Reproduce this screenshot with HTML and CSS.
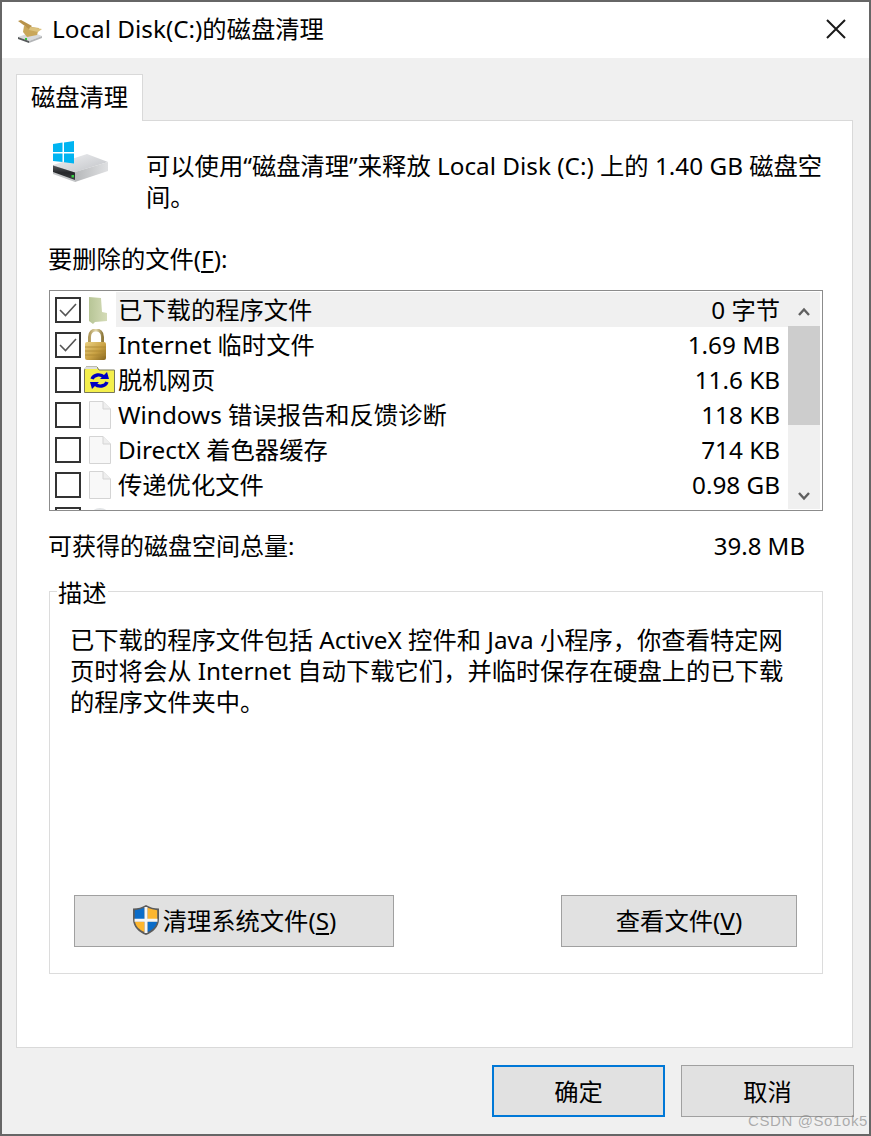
FILE: index.html
```html
<!DOCTYPE html>
<html lang="zh-CN">
<head>
  <meta charset="UTF-8" />
  <title>Local Disk(C:)的磁盘清理</title>
  <link rel="stylesheet" href="styles.css">
</head>
<body>
  <div class="window">
    <div class="titlebar">
      <svg class="title-icon" viewBox="17 17 28 26" width="28" height="26">
        <polygon points="18,36 32,31 42,35 29,40" fill="#d8dadc"/>
        <polygon points="18,36 29,40 29,42 18,38" fill="#55585a"/>
        <polygon points="29,40 42,35 42,37 29,42" fill="#b4b6b8"/>
        <rect x="25" y="37" width="2" height="2" fill="#35c040"/>
        <polygon points="24,25 39,27 37,34 27,36 23,31" fill="#c9a75a"/>
        <polygon points="18,20 21,19 32,25 29,28" fill="#b8924a"/>
        <polygon points="30,26 42,28 38,31 29,29" fill="#dcc27e"/>
      </svg>
      <span class="title-text">Local Disk(C:)的磁盘清理</span>
      <svg class="close-icon" viewBox="0 0 20 20" width="20" height="20">
        <path d="M1 1 L19 19 M19 1 L1 19" stroke="#1a1a1a" stroke-width="2" fill="none"/>
      </svg>
    </div>

    <div class="content">
      <div class="tab">磁盘清理</div>
      <div class="panel">
        <div class="intro">
          <svg class="drive-icon" viewBox="52 140 60 44" width="60" height="44">
            <defs>
              <linearGradient id="driveTop" x1="0" y1="0" x2="1" y2="1">
                <stop offset="0" stop-color="#f0f1f3"/>
                <stop offset="1" stop-color="#c0c2c6"/>
              </linearGradient>
              <linearGradient id="driveSide" x1="0" y1="0" x2="1" y2="0">
                <stop offset="0" stop-color="#b6b8ba"/>
                <stop offset="1" stop-color="#dfe0e2"/>
              </linearGradient>
              <linearGradient id="driveFront" x1="0" y1="0" x2="0" y2="1">
                <stop offset="0" stop-color="#55585c"/>
                <stop offset="0.5" stop-color="#26282b"/>
                <stop offset="1" stop-color="#3c3f42"/>
              </linearGradient>
            </defs>
            <polygon points="53,165 87,154 108,162 75,172" fill="url(#driveTop)"/>
            <polygon points="75,172 108,162 108,171 75,182" fill="url(#driveSide)"/>
            <polygon points="53,165 75,172 75,182 53,174" fill="#c4c6c8"/>
            <polygon points="53,165.5 75,172.5 75,180 53,172" fill="url(#driveFront)"/>
            <rect x="71.5" y="175" width="2.5" height="2.5" fill="#35d040"/>
            <polygon points="53,144 62.5,142.6 62.5,152 53,152" fill="#00b4f1"/>
            <polygon points="64,142.4 74,141 74,152 64,152" fill="#00b4f1"/>
            <polygon points="53,153.5 62.5,153.5 62.5,162 53,161" fill="#00b4f1"/>
            <polygon points="64,153.5 74,153.5 74,163.5 64,162.2" fill="#00b4f1"/>
          </svg>
          <p class="intro-text">可以使用“磁盘清理”来释放 Local Disk (C:) 上的 1.40 GB 磁盘空<br>间。</p>
        </div>

        <div class="list-label">要删除的文件(<u>F</u>):</div>

        <div class="file-list">
          <div class="rows">
            <div class="row">
              <span class="check checked"><svg viewBox="0 0 22 22" width="22" height="22"><path d="M3 11 L8.5 16.5 L19 5" stroke="#555" stroke-width="1.6" fill="none"/></svg></span>
              <span class="row-icon">
                <svg viewBox="84 295 32 30" width="32" height="30">
                  <defs>
                    <linearGradient id="greenFolder" x1="0" y1="0" x2="1" y2="0">
                      <stop offset="0" stop-color="#b7c596"/>
                      <stop offset="1" stop-color="#d5dcb8"/>
                    </linearGradient>
                  </defs>
                  <polygon points="89,297 101,298 102,312 107,313 107,321 95,322 93,324 89,321" fill="url(#greenFolder)"/>
                </svg>
              </span>
              <span class="row-body selected"><span>已下载的程序文件</span><span>0 字节</span></span>
            </div>
            <div class="row">
              <span class="check checked"><svg viewBox="0 0 22 22" width="22" height="22"><path d="M3 11 L8.5 16.5 L19 5" stroke="#555" stroke-width="1.6" fill="none"/></svg></span>
              <span class="row-icon">
                <svg viewBox="84 328 32 32" width="32" height="32">
                  <defs>
                    <linearGradient id="lockBody" x1="0" y1="0" x2="1" y2="1">
                      <stop offset="0" stop-color="#ecd283"/>
                      <stop offset="0.55" stop-color="#c8a042"/>
                      <stop offset="1" stop-color="#866620"/>
                    </linearGradient>
                    <linearGradient id="lockShackle" x1="0" y1="0" x2="1" y2="0">
                      <stop offset="0" stop-color="#b09a5c"/>
                      <stop offset="0.5" stop-color="#e4d9ac"/>
                      <stop offset="1" stop-color="#8f7a3e"/>
                    </linearGradient>
                  </defs>
                  <path d="M89.5 342 V336 C89.5 326.5 102.5 326.5 102.5 336 V342" fill="none" stroke="url(#lockShackle)" stroke-width="3"/>
                  <rect x="85" y="341" width="21" height="18" rx="2" fill="url(#lockBody)"/>
                  <path d="M85 346 H106 M85 350 H106 M85 354 H106" stroke="#a98530" stroke-width="0.8"/>
                </svg>
              </span>
              <span class="row-body"><span>Internet 临时文件</span><span>1.69 MB</span></span>
            </div>
            <div class="row">
              <span class="check"></span>
              <span class="row-icon">
                <svg viewBox="84 363 32 29" width="32" height="29">
                  <path d="M84.5 368 L86 365 H97 L99 368 H114.5 V390.5 H84.5 Z" fill="#f4ef4c" stroke="#77775a"/>
                  <path d="M85 366 H97" stroke="#dedede" stroke-width="2"/>
                  <path d="M92 377 A7 6 0 0 1 104 375" stroke="#0000c4" stroke-width="3.4" fill="none"/>
                  <polygon points="100,377 109,377 107,370" fill="#0000c4"/>
                  <path d="M107 380 A7 6 0 0 1 95 382" stroke="#0000c4" stroke-width="3.4" fill="none"/>
                  <polygon points="99,380 90,380 92,387" fill="#0000c4"/>
                </svg>
              </span>
              <span class="row-body"><span>脱机网页</span><span>11.6 KB</span></span>
            </div>
            <div class="row">
              <span class="check"></span>
              <span class="row-icon">
                <svg class="page" viewBox="0 0 32 30" width="32" height="30"><path d="M5.5 1.5 H19 L26.5 9 V28.5 H5.5 Z" fill="#f8f8f8" stroke="#d4d4d4"/><path d="M19 1.5 V9 H26.5" fill="#eee" stroke="#d4d4d4"/></svg>
              </span>
              <span class="row-body"><span>Windows 错误报告和反馈诊断</span><span>118 KB</span></span>
            </div>
            <div class="row">
              <span class="check"></span>
              <span class="row-icon">
                <svg class="page" viewBox="0 0 32 30" width="32" height="30"><path d="M5.5 1.5 H19 L26.5 9 V28.5 H5.5 Z" fill="#f8f8f8" stroke="#d4d4d4"/><path d="M19 1.5 V9 H26.5" fill="#eee" stroke="#d4d4d4"/></svg>
              </span>
              <span class="row-body"><span>DirectX 着色器缓存</span><span>714 KB</span></span>
            </div>
            <div class="row">
              <span class="check"></span>
              <span class="row-icon">
                <svg class="page" viewBox="0 0 32 30" width="32" height="30"><path d="M5.5 1.5 H19 L26.5 9 V28.5 H5.5 Z" fill="#f8f8f8" stroke="#d4d4d4"/><path d="M19 1.5 V9 H26.5" fill="#eee" stroke="#d4d4d4"/></svg>
              </span>
              <span class="row-body"><span>传递优化文件</span><span>0.98 GB</span></span>
            </div>
            <div class="row">
              <span class="check"></span>
              <span class="row-icon">
                <svg viewBox="0 0 32 30" width="32" height="30"><ellipse cx="16" cy="12" rx="10" ry="9" fill="#e2e4e6"/></svg>
              </span>
              <span class="row-body"></span>
            </div>
          </div>
          <div class="scrollbar">
            <svg class="arrow" viewBox="0 0 32 34" width="32" height="34"><path d="M11 23 L16 17.5 L21 23" stroke="#606060" stroke-width="2.4" fill="none"/></svg>
            <div class="thumb"></div>
            <svg class="arrow arrow-down" viewBox="0 0 32 34" width="32" height="34"><path d="M11 18 L16 23.5 L21 18" stroke="#606060" stroke-width="2.4" fill="none"/></svg>
          </div>
        </div>

        <div class="total">
          <span>可获得的磁盘空间总量:</span>
          <span>39.8 MB</span>
        </div>

        <div class="group">
          <span class="legend">描述</span>
          <p class="description">已下载的程序文件包括 ActiveX 控件和 Java 小程序，你查看特定网<br>页时将会从 Internet 自动下载它们，并临时保存在硬盘上的已下载<br>的程序文件夹中。</p>
          <div class="group-actions">
            <button class="btn btn-clean">
              <svg class="shield" viewBox="0 0 28 32" width="28" height="32">
                <path d="M14 1 C10 3.5 6 4.5 1 4.5 V15 C1 23 7 28.5 14 31 C21 28.5 27 23 27 15 V4.5 C22 4.5 18 3.5 14 1 Z" fill="#5c5c5c"/>
                <path d="M12.5 3.8 C9.5 5 6 6 2.8 6.2 V15 H12.5 Z" fill="#0b6cc8"/>
                <path d="M15.5 3.8 C18.5 5 22 6 25.2 6.2 V15 H15.5 Z" fill="#fdb62f"/>
                <path d="M2.9 17.5 H12.5 V28 C7.5 26 3.8 22.5 2.9 17.5 Z" fill="#fdb62f"/>
                <path d="M25.1 17.5 H15.5 V28 C20.5 26 24.2 22.5 25.1 17.5 Z" fill="#0b6cc8"/>
                <path d="M14 3 V29 M2.5 16.2 H25.5" stroke="#f6f6f6" stroke-width="3" fill="none"/>
              </svg>
              <span>清理系统文件(<u>S</u>)</span>
            </button>
            <button class="btn btn-view">查看文件(<u>V</u>)</button>
          </div>
        </div>
      </div>

      <div class="footer">
        <button class="btn btn-footer btn-default">确定</button>
        <button class="btn btn-footer">取消</button>
      </div>
    </div>
  </div>
  <div class="watermark">CSDN @So1ok5</div>
</body>
</html>
```

FILE: styles.css
```css
html, body {
  margin: 0;
  height: 100%;
}

body {
  position: relative;
  width: 871px;
  height: 1136px;
  overflow: hidden;
  background: #666;
  font-family: "Noto Sans", "Noto Sans CJK SC", sans-serif;
  font-size: 24.3px;
  line-height: 31px;
  color: #000;
}

.window {
  width: 867px;
  height: 1132px;
  margin: 2px 2px 0;
  display: flex;
  flex-direction: column;
  background: #f0f0f0;
}

.titlebar {
  height: 56px;
  flex: none;
  display: flex;
  align-items: center;
  background: #fff;
  padding: 0 13px 0 15px;
}

.title-icon {
  margin: 2px 8px 0 0;
}

.title-text {
  flex: 1;
  margin: -4px 0 0 -1px;
}

.close-icon {
  margin: 0 10px 2px 0;
}

.content {
  flex: 1;
  padding: 16px 16px 0 14px;
}

.tab {
  width: 125px;
  height: 46px;
  line-height: 43px;
  background: #fff;
  border: 1px solid #d9d9d9;
  border-bottom: none;
  text-align: center;
  position: relative;
  z-index: 1;
  margin-bottom: -1px;
}

.panel {
  height: 926px;
  padding: 0 29px 0 32px;
  background: #fff;
  border: 1px solid #d9d9d9;
}

.intro {
  display: flex;
  padding-top: 29px;
}

.drive-icon {
  margin: -10px 0 0 3px;
  flex: none;
}

.intro-text {
  margin: 0 0 0 34px;
  white-space: nowrap;
}

.list-label {
  margin: 31px 0 0 -1px;
}

.list-label u,
.btn u {
  text-underline-offset: 3px;
}

.file-list {
  display: flex;
  height: 219px;
  margin-top: 16px;
  border: 1px solid #8c8c8c;
  overflow: hidden;
}

.rows {
  flex: 1;
  padding-top: 1px;
}

.row {
  display: flex;
  align-items: center;
  height: 35px;
}

.check {
  width: 22px;
  height: 22px;
  flex: none;
  margin-left: 5px;
  border: 2px solid #333;
  background: #fff;
}

.check svg {
  display: block;
}

.row-icon {
  width: 32px;
  flex: none;
  margin-left: 3px;
  display: flex;
  justify-content: center;
}

.row-icon svg {
  display: block;
}

.row-body {
  flex: 1;
  height: 35px;
  display: flex;
  justify-content: space-between;
  align-items: center;
  padding: 0 8px 0 2px;
}

.selected {
  background: #f0f0f0;
}

.scrollbar {
  width: 32px;
  flex: none;
  margin: 1px 2px 1px 0;
  display: flex;
  flex-direction: column;
  background: #f0f0f0;
}

.arrow {
  display: block;
  flex: none;
}

.arrow-down {
  margin-top: auto;
}

.thumb {
  height: 99px;
  background: #cdcdcd;
}

.total {
  display: flex;
  justify-content: space-between;
  margin: 19px 0 0 -1px;
  padding-right: 18px;
  font-size: 24px;
}

.group {
  position: relative;
  height: 381px;
  margin-top: 30px;
  border: 1px solid #dcdcdc;
  display: flex;
  flex-direction: column;
}

.legend {
  position: absolute;
  top: -15px;
  left: 7px;
  padding: 0 1px;
  background: #fff;
}

.description {
  margin: 32px 0 0 20px;
  white-space: nowrap;
}

.group-actions {
  margin-top: auto;
  display: flex;
  justify-content: space-between;
  padding: 0 25px 26px 24px;
}

.btn {
  height: 52px;
  padding: 0 0 2px;
  font: inherit;
  color: #000;
  background: #e1e1e1;
  border: 1px solid #a0a0a0;
  box-sizing: border-box;
}

.btn-clean {
  width: 320px;
  display: flex;
  align-items: center;
  justify-content: center;
  gap: 3px;
}

.btn-view {
  width: 236px;
}

.shield {
  display: block;
}

.footer {
  display: flex;
  justify-content: flex-end;
  gap: 16px;
  margin: 17px -1px 0 0;
}

.btn-footer {
  width: 173px;
  padding: 0;
}

.btn-default {
  border: 2px solid #0078d7;
}

.watermark {
  position: absolute;
  right: 3px;
  bottom: 6px;
  font-family: "Liberation Sans", sans-serif;
  font-size: 15px;
  line-height: 18px;
  letter-spacing: 0.6px;
  color: rgba(125, 125, 125, 0.6);
}
```
